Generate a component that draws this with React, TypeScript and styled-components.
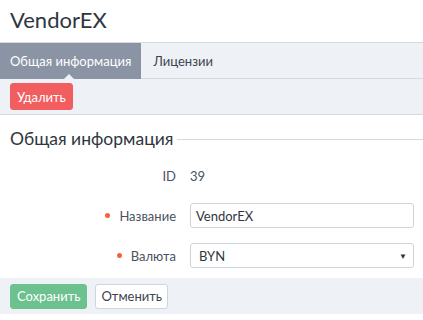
import styled, { createGlobalStyle } from "styled-components";

const GlobalStyle = createGlobalStyle`
  body {
    margin: 0;
    background: #ffffff;
    font-family: Lato, "Open Sans", "Liberation Sans", sans-serif;
    color: #4a525e;
  }
`;

const Page = styled.div`
  width: 423px;
  display: flex;
  flex-direction: column;
`;

const Header = styled.div`
  height: 42px;
  box-sizing: border-box;
  padding: 5px 10px 0;
`;

const Title = styled.h1`
  margin: 0;
  font-size: 22px;
  line-height: 30px;
  font-weight: 400;
  color: #2f3640;
`;

const TabBar = styled.div`
  display: flex;
  height: 37px;
  box-sizing: border-box;
  background: #eef2f6;
  border-top: 1px solid #d5dae1;
  border-bottom: 1px solid #d5dae1;
`;

const Tab = styled.div<{ $active?: boolean }>`
  position: relative;
  display: flex;
  align-items: center;
  padding: 0 ${(p) => (p.$active ? "10px 0 10px" : "12px 0 12px")};
  font-size: 13px;
  color: ${(p) => (p.$active ? "#ffffff" : "#3c4450")};
  background: ${(p) => (p.$active ? "#8a94a5" : "transparent")};
  margin-bottom: -1px;

  ${(p) =>
    p.$active &&
    `
    &::after {
      content: "";
      position: absolute;
      left: 50%;
      bottom: 0;
      margin-left: -7px;
      border-left: 5px solid transparent;
      border-right: 5px solid transparent;
      border-bottom: 5px solid #eef2f6;
    }
  `}
`;

const ActionBar = styled.div`
  height: 36px;
  box-sizing: border-box;
  display: flex;
  align-items: center;
  padding: 0 10px;
  background: #eef2f6;
  border-bottom: 1px solid #d5dae1;
`;

const Button = styled.button<{ $kind: "danger" | "primary" | "default" }>`
  font-family: inherit;
  font-size: 13px;
  height: ${(p) => (p.$kind === "danger" ? "27px" : "25px")};
  padding: 0 ${(p) => (p.$kind === "default" ? "5px" : "6px")};
  border-radius: 3px;
  cursor: pointer;
  border: 1px solid
    ${(p) =>
      p.$kind === "danger" ? "#f25d60" : p.$kind === "primary" ? "#6cc18f" : "#cfd5dc"};
  background: ${(p) =>
    p.$kind === "danger" ? "#f25d60" : p.$kind === "primary" ? "#6cc18f" : "#ffffff"};
  color: ${(p) => (p.$kind === "default" ? "#3c4450" : "#ffffff")};
`;

const Section = styled.div`
  padding-top: 12px;
`;

const Legend = styled.div`
  display: flex;
  align-items: center;
  gap: 4px;
  padding-left: 10px;
  font-size: 17.5px;
  line-height: 24px;
  color: #2f3640;

  &::after {
    content: "";
    flex: 1;
    height: 1px;
    background: #d5dae1;
  }
`;

const Form = styled.div`
  display: grid;
  grid-template-columns: 176px 1fr;
  column-gap: 14px;
  row-gap: 15px;
  padding: 12px 9px 0 0;
`;

const Label = styled.div<{ $required?: boolean }>`
  display: flex;
  align-items: center;
  justify-content: flex-end;
  gap: 9px;
  height: 25px;
  font-size: 13px;
  color: #4a525e;

  ${(p) =>
    p.$required &&
    `
    &::before {
      content: "";
      width: 5px;
      height: 5px;
      border-radius: 50%;
      background: #f0643d;
    }
  `}
`;

const Value = styled.div`
  display: flex;
  align-items: center;
  height: 25px;
  font-size: 13px;
  color: #4a525e;
`;

const Input = styled.input`
  box-sizing: border-box;
  width: 100%;
  height: 25px;
  padding: 0 5px;
  font-family: inherit;
  font-size: 13px;
  color: #2f3640;
  border: 1px solid #cdd3da;
  border-radius: 3px;
  outline: none;
`;

const SelectBox = styled.div`
  box-sizing: border-box;
  display: flex;
  align-items: center;
  justify-content: space-between;
  height: 25px;
  padding: 0 6px 0 8px;
  font-size: 13px;
  color: #2f3640;
  border: 1px solid #cdd3da;
  border-radius: 3px;
`;

const Caret = styled.span`
  font-size: 8px;
  color: #333;
`;

const Footer = styled.div`
  display: flex;
  gap: 8px;
  align-items: center;
  margin-top: 10px;
  height: 36px;
  padding: 0 10px;
  background: #eef2f6;
`;

export default function App() {
  return (
    <Page>
      <GlobalStyle />
      <Header>
        <Title>VendorEX</Title>
      </Header>
      <TabBar>
        <Tab $active>Общая информация</Tab>
        <Tab>Лицензии</Tab>
      </TabBar>
      <ActionBar>
        <Button $kind="danger">Удалить</Button>
      </ActionBar>
      <Section>
        <Legend>Общая информация</Legend>
        <Form>
          <Label>ID</Label>
          <Value>39</Value>
          <Label $required>Название</Label>
          <Input defaultValue="VendorEX" />
          <Label $required>Валюта</Label>
          <SelectBox>
            BYN
            <Caret>▼</Caret>
          </SelectBox>
        </Form>
      </Section>
      <Footer>
        <Button $kind="primary">Сохранить</Button>
        <Button $kind="default">Отменить</Button>
      </Footer>
    </Page>
  );
}
